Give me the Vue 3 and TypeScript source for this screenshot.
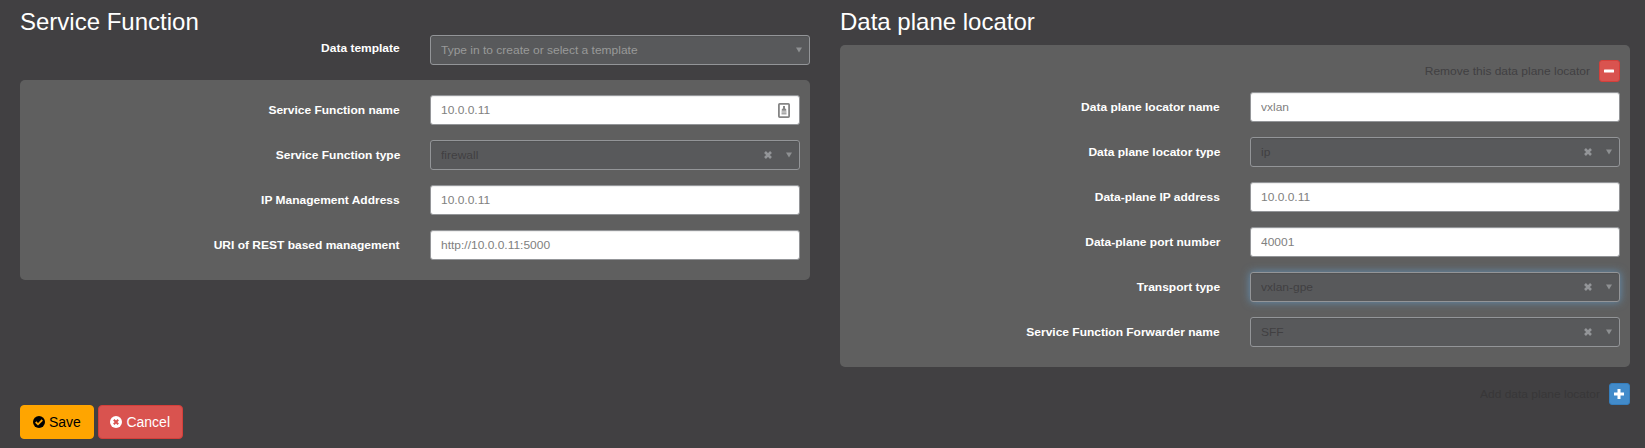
<script setup lang="ts">
import { ref } from 'vue'

type Kind = 'text' | 'select'

interface Field {
  label: string
  value: string
  kind: Kind
  focused?: boolean
  contact?: boolean
}

const functionFields = ref<Field[]>([
  { label: 'Service Function name', value: '10.0.0.11', kind: 'text', contact: true },
  { label: 'Service Function type', value: 'firewall', kind: 'select' },
  { label: 'IP Management Address', value: '10.0.0.11', kind: 'text' },
  { label: 'URI of REST based management', value: 'http://10.0.0.11:5000', kind: 'text' },
])

const locatorFields = ref<Field[]>([
  { label: 'Data plane locator name', value: 'vxlan', kind: 'text' },
  { label: 'Data plane locator type', value: 'ip', kind: 'select' },
  { label: 'Data-plane IP address', value: '10.0.0.11', kind: 'text' },
  { label: 'Data-plane port number', value: '40001', kind: 'text' },
  { label: 'Transport type', value: 'vxlan-gpe', kind: 'select', focused: true },
  { label: 'Service Function Forwarder name', value: 'SFF', kind: 'select' },
])
</script>

<template>
  <main class="page">
    <div class="columns">
      <section class="column">
        <h1>Service Function</h1>
        <div class="row template-row">
          <label><span>Data template</span></label>
          <div class="control select placeholder">
            <span class="value">Type in to create or select a template</span>
            <svg class="arrow" viewBox="0 0 6 5"><path d="M0 0h6L3 5z" /></svg>
          </div>
        </div>
        <div class="panel">
          <div v-for="f in functionFields" :key="f.label" class="row">
            <label><span>{{ f.label }}</span></label>
            <div class="control" :class="[f.kind, { focused: f.focused }]">
              <span class="value">{{ f.value }}</span>
              <svg v-if="f.contact" class="contact" viewBox="0 0 12 15">
                <rect x="0.9" y="0.9" width="10.2" height="13.2" rx="0.8" fill="#fff" stroke="#858585" stroke-width="1.8" />
                <path d="M5 3h2v2.200l1.300 1.200v1.400H3.700V6.400L5 5.200z" fill="#858585" />
                <path d="M3.500 9h5M3.500 10.800h5" stroke="#a8a8a8" stroke-width="1.400" />
              </svg>
              <template v-if="f.kind === 'select'">
                <svg class="clear" viewBox="0 0 8 8"><path d="M1 1l6 6M7 1L1 7" /></svg>
                <svg class="arrow" viewBox="0 0 6 5"><path d="M0 0h6L3 5z" /></svg>
              </template>
            </div>
          </div>
        </div>
      </section>

      <section class="column">
        <h1>Data plane locator</h1>
        <div class="panel">
          <div class="action">
            <span>Remove this data plane locator</span>
            <button class="mini remove" aria-label="Remove">
              <svg viewBox="0 0 10 10"><rect x="0" y="3.500" width="10" height="3" rx="0.500" /></svg>
            </button>
          </div>
          <div v-for="f in locatorFields" :key="f.label" class="row">
            <label><span>{{ f.label }}</span></label>
            <div class="control" :class="[f.kind, { focused: f.focused }]">
              <span class="value">{{ f.value }}</span>
              <template v-if="f.kind === 'select'">
                <svg class="clear" viewBox="0 0 8 8"><path d="M1 1l6 6M7 1L1 7" /></svg>
                <svg class="arrow" viewBox="0 0 6 5"><path d="M0 0h6L3 5z" /></svg>
              </template>
            </div>
          </div>
        </div>
        <div class="action add-action">
          <span>Add data plane locator</span>
          <button class="mini add" aria-label="Add">
            <svg viewBox="0 0 10 10"><path d="M3.500 0h3v3.500H10v3H6.500V10h-3V6.500H0v-3h3.500z" /></svg>
          </button>
        </div>
      </section>
    </div>

    <footer class="buttons">
      <button class="btn save">
        <svg viewBox="0 0 12 12">
          <circle cx="6" cy="6" r="6" fill="#000" />
          <path d="M2.700 6l2.300 2.300L9.300 4" fill="none" stroke="#ffa500" stroke-width="1.800" />
        </svg>
        <span>Save</span>
      </button>
      <button class="btn cancel">
        <svg viewBox="0 0 12 12">
          <circle cx="6" cy="6" r="6" fill="#fff" />
          <path d="M3.800 3.800l4.400 4.400M8.200 3.800L3.800 8.200" fill="none" stroke="#d9534f" stroke-width="2" />
        </svg>
        <span>Cancel</span>
      </button>
    </footer>
  </main>
</template>

<style>
body {
  margin: 0;
  background: #414042;
}
</style>

<style scoped>
.page {
  box-sizing: border-box;
  width: 1645px;
  height: 448px;
  padding: 0 15px 9px 20px;
  display: flex;
  flex-direction: column;
  justify-content: space-between;
  overflow: hidden;
  background: #414042;
  color: #414042;
  font: 11.4px/18px "Liberation Sans", Arial, sans-serif;
}
.columns {
  display: grid;
  grid-template-columns: 790px 790px;
  column-gap: 30px;
}
h1 {
  margin: 0;
  height: 45px;
  line-height: 43px;
  font-size: 24px;
  font-weight: 400;
  color: #fff;
}
.panel {
  box-sizing: border-box;
  padding: 15px 10px 5px;
  border-radius: 5px;
  background: #5f5f5f;
}
.row {
  display: grid;
  grid-template-columns: 370px 370px;
  column-gap: 30px;
  height: 30px;
  margin-bottom: 15px;
}
.template-row {
  grid-template-columns: 380px 380px;
  margin-top: -10px;
}
.template-row label {
  line-height: 26px;
}
label {
  text-align: right;
  font-weight: 700;
  line-height: 30px;
  color: #fff;
}
label span,
.action span {
  display: inline-block;
  transform: scaleX(1.0526);
  transform-origin: right center;
}
.control {
  box-sizing: border-box;
  height: 30px;
  display: flex;
  align-items: center;
  padding: 0 7px 0 10px;
  border: 1px solid #939598;
  border-radius: 3px;
  background: #fff;
  color: #808080;
  box-shadow: inset 0 1px 1px rgba(0, 0, 0, 0.075);
}
.value {
  margin-right: auto;
  transform: scaleX(1.0526);
  transform-origin: left center;
}
.select {
  background: #58595b;
  color: #414042;
}
.placeholder {
  color: #999;
}
.focused {
  box-shadow: inset 0 1px 1px rgba(0, 0, 0, 0.075), 0 0 8px rgba(102, 175, 233, 0.6);
}
.arrow {
  width: 6px;
  height: 6px;
  fill: #8e9092;
}
.clear {
  width: 8px;
  height: 8px;
  margin-right: 14px;
  fill: none;
  stroke: #939598;
  stroke-width: 2.6;
}
.contact {
  width: 12px;
  height: 15px;
  margin: 0 2px 0 0;
}
.action {
  display: flex;
  justify-content: flex-end;
  align-items: center;
  gap: 9px;
  height: 22px;
  margin-bottom: 10px;
}
.add-action {
  margin: 16px 0 0;
  color: #383738;
}
.mini {
  box-sizing: border-box;
  width: 21px;
  height: 22px;
  display: flex;
  align-items: center;
  justify-content: center;
  padding: 0 1px 1px 0;
  border: 1px solid;
  border-radius: 3px;
}
.mini svg {
  width: 10px;
  height: 10px;
  fill: #fff;
}
.remove,
.cancel {
  background: #d9534f;
  border-color: #d43f3a;
  color: #fff;
}
.add {
  background: #428bca;
  border-color: #357ebd;
}
.buttons {
  display: flex;
  gap: 4px;
}
.btn {
  box-sizing: border-box;
  height: 34px;
  display: flex;
  align-items: center;
  gap: 4px;
  padding: 0 12px;
  border-width: 1px;
  border-style: solid;
  border-radius: 4px;
  font: 14px/20px "Liberation Sans", Arial, sans-serif;
}
.btn svg {
  width: 12px;
  height: 12px;
}
.save {
  background: #ffa500;
  border-color: #ffa500;
  color: #000;
}
.btn.cancel {
  padding-left: 11.5px;
  padding-right: 11.5px;
}
</style>
